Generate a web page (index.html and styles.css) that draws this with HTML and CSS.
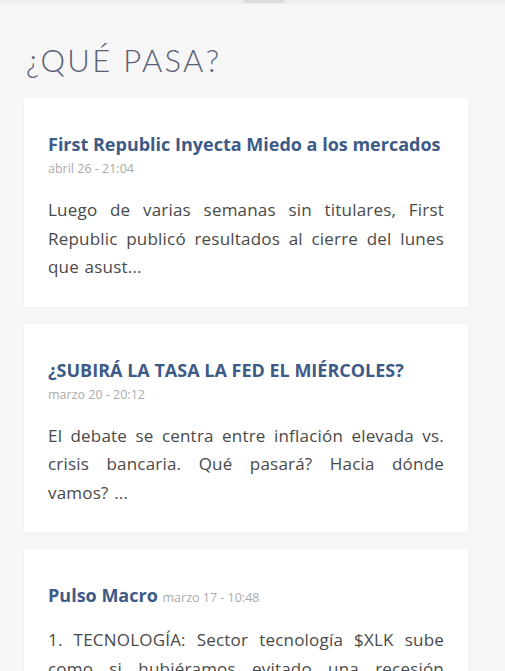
FILE: index.html
```html
<!DOCTYPE html>
<html lang="es">
<head>
  <meta charset="UTF-8">
  <meta name="viewport" content="width=device-width, initial-scale=1.0">
  <title>¿Qué pasa?</title>
  <link rel="stylesheet" href="styles.css">
</head>
<body>
  <div class="topbar"><span class="handle"></span></div>

  <main class="feed">
    <h1 class="feed-title">¿QUÉ PASA?</h1>

    <article class="post">
      <h2 class="post-title">First Republic Inyecta Miedo a los mercados</h2>
      <div class="post-date">abril 26 - 21:04</div>
      <p class="post-body">Luego de varias semanas sin titulares, First Republic publicó resultados al cierre del lunes que asust...</p>
    </article>

    <article class="post">
      <h2 class="post-title">¿SUBIRÁ LA TASA LA FED EL MIÉRCOLES?</h2>
      <div class="post-date">marzo 20 - 20:12</div>
      <p class="post-body">El debate se centra entre inflación elevada vs. crisis bancaria. Qué pasará? Hacia dónde vamos? ...</p>
    </article>

    <article class="post">
      <h2 class="post-title">Pulso Macro <span class="post-date inline">marzo 17 - 10:48</span></h2>
      <p class="post-body">1. TECNOLOGÍA: Sector tecnología $XLK sube como si hubiéramos evitado una recesión económica y la crisis bancaria...</p>
    </article>
  </main>
</body>
</html>
```

FILE: styles.css
```css
body {
  margin: 0;
  background-color: #f6f6f7;
  font-family: 'Open Sans', 'Noto Sans', sans-serif;
  color: #494949;
  overflow: hidden;
}
.topbar {
  height: 4px;
  background-color: #efeff0;
  display: flex;
  justify-content: center;
}
.handle {
  width: 40px;
  height: 3px;
  margin-left: 22px;
  background-color: #dcdcde;
}
.feed {
  padding: 0 37px 0 24px;
}
.feed-title {
  margin: 0;
  padding: 34px 0 0 2px;
  height: 60px;
  font-family: 'Lato', sans-serif;
  font-weight: 300;
  font-size: 31px;
  line-height: 44px;
  letter-spacing: 2.3px;
  color: #596177;
}
.post {
  background-color: #fff;
  padding: 34px 24px 25px;
  margin-bottom: 17px;
  box-shadow: 0 1px 2px rgba(0, 0, 0, 0.03);
}
.post-title {
  margin: 0;
  font-size: 18px;
  line-height: 24px;
  font-weight: 700;
  color: #3e5a87;
}
.post-date {
  margin-top: 5px;
  font-size: 12.5px;
  line-height: 16px;
  font-weight: 400;
  color: #ababab;
}
.post-date.inline {
  display: inline;
  margin: 0;
}
.post-body {
  margin: 19px 0 0;
  font-size: 17px;
  line-height: 28.5px;
  letter-spacing: 0.2px;
  word-spacing: 1px;
  text-align: justify;
}
```
